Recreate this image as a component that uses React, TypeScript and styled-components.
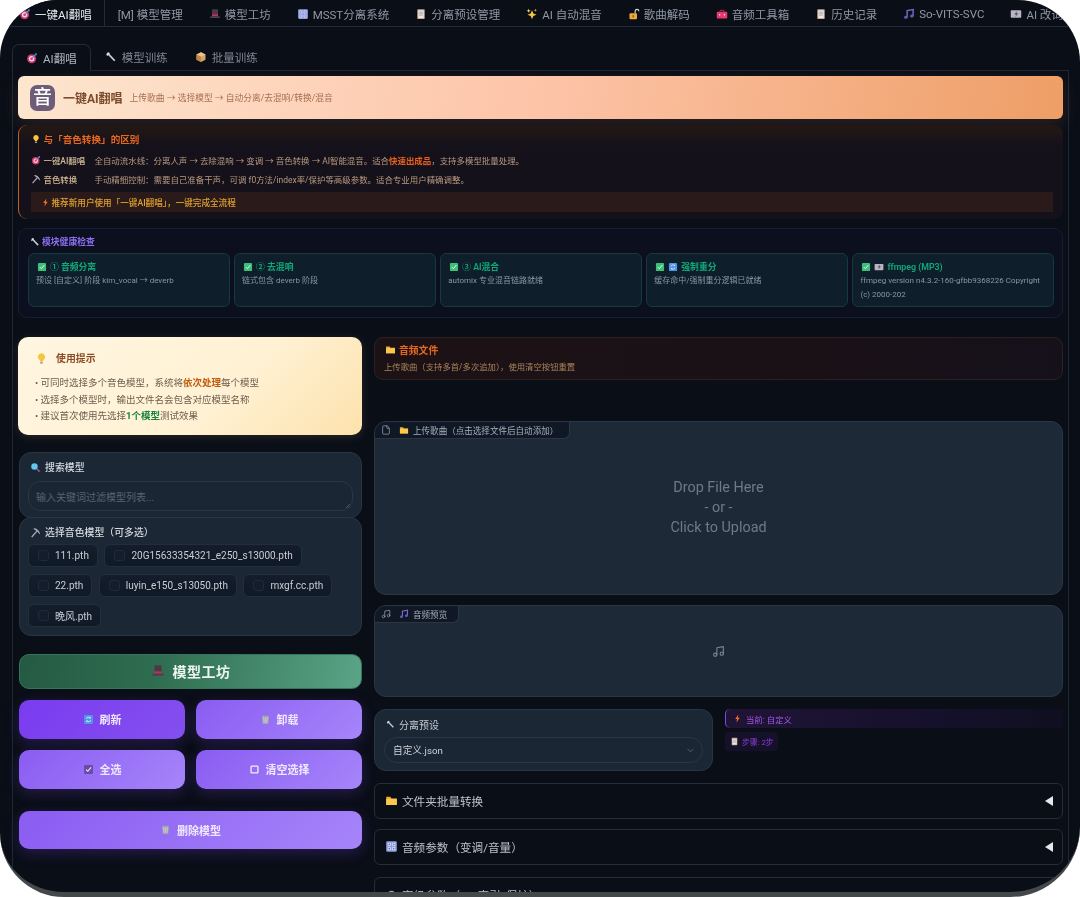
import React from "react";
import styled, { createGlobalStyle } from "styled-components";
import { File as FileIcon, Music, ChevronDown } from "lucide-react";

const Global = createGlobalStyle`
  html, body { margin: 0; padding: 0; background: #ffffff; }
  body { font-family: Roboto, "Noto Sans CJK SC", "Liberation Sans", sans-serif; overflow: hidden; }
  * { box-sizing: border-box; }
`;

const Frame = styled.div`
  width: 1080px; height: 897px; overflow: hidden; background: #0a0e17;
  border-radius: 58px 62px 70px 64px; border-bottom: 5px solid #44484b; filter: blur(0.4px);
  color: #c9ced6;
`;
const TopBar = styled.div`
  display: flex; height: 27px; padding-left: 6px; border-bottom: 1px solid #232b38; white-space: nowrap; overflow: hidden;
`;
const TopTab = styled.div<{ $active?: boolean }>`
  display: flex; align-items: center; gap: 4px; padding: 0 13px; height: 27px; font-size: 11.5px; flex: none;
  color: ${p => (p.$active ? "#e2e6ec" : "#8f98a5")};
  ${p => p.$active && "background:#0a0e17;border-right:1px solid #232b38;margin-bottom:-1px;padding-right:12px;"}
`;
const SubBar = styled.div`
  display: flex; margin: 17px 0 0 12px; height: 26px; align-items: stretch;
`;
const SubTab = styled.div<{ $active?: boolean }>`
  display: flex; align-items: center; gap: 5px; font-size: 11.5px; padding: 0 13px; flex: none;
  color: ${p => (p.$active ? "#aeb5c0" : "#7e8794")};
  ${p => p.$active
    ? "border:1px solid #232b38;border-bottom:none;border-radius:7px 7px 0 0;background:#0a0e17;margin-bottom:-1px;position:relative;z-index:1;"
    : "margin-left:1px;"}
`;
const Panel = styled.div`
  margin: 0 11px 0 12px; border: 1px solid #1f2733; border-bottom: none; padding: 5px 5px 0; height: 830px;
`;
const Hero = styled.div`
  height: 43px; border-radius: 6px; display: flex; align-items: center; padding-left: 12px;
  background: linear-gradient(100deg, #fde6cf 0%, #fdc4a8 50%, #ee9e66 100%);
  box-shadow: 0 6px 18px rgba(240, 150, 100, 0.14);
`;
const HeroLogo = styled.div`
  width: 25px; height: 26px; border-radius: 7px; background: #6e5d78; color: #fff; font-size: 19px; font-weight: 500;
  display: flex; align-items: center; justify-content: center; line-height: 1; margin-right: 8px;
`;
const HeroTitle = styled.span`font-size: 12px; font-weight: 700; color: #7b4a2b; margin-right: 7px;`;
const HeroSub = styled.span`font-size: 8.75px; color: #a86f52;`;

const Info = styled.div`
  margin-top: 6px; height: 94px; border-left: 1.5px solid #bd6220; border-radius: 9px; padding: 7px 10px 0 11.5px;
  background: linear-gradient(180deg, #241815 0%, #15111a 22%, #15111a 100%);
`;
const InfoTitle = styled.div`
  display: flex; align-items: center; gap: 3px; font-size: 9.6px; font-weight: 700; color: #e8681e; height: 14px; margin-bottom: 4px;
`;
const InfoRow = styled.div`
  display: flex; align-items: center; height: 19px; font-size: 8.45px; color: #b89a80; white-space: nowrap;
`;
const InfoLabel = styled.span`
  display: flex; align-items: center; gap: 3px; width: 64px; flex: none; font-weight: 500; color: #d0b896;
`;
const Hot = styled.b`color: #e8601c; font-weight: 600;`;
const Recommend = styled.div`
  margin-top: 4px; height: 20px; background: #2a1a1a; display: flex; align-items: center; gap: 2px; padding-left: 10px;
  font-size: 8.6px; font-weight: 500; color: #dfa02e;
`;

const Health = styled.div`
  margin-top: 9px; height: 90px; border: 1px solid #171d38; border-radius: 9px; background: #0c0f1d; padding: 5px 8px 0 9px;
`;
const HealthTitle = styled.div`
  display: flex; align-items: center; gap: 2px; height: 15px; font-size: 8.8px; font-weight: 600; color: #8a6ff2; margin: 0 0 4px 2px;
`;
const CardGrid = styled.div`display: grid; grid-template-columns: repeat(5, 1fr); gap: 4.5px;`;
const Card = styled.div`
  height: 54px; border: 1px solid #14393f; border-radius: 6px; background: #0f1e2b; padding: 6px 7px 0 8px;
`;
const CardHead = styled.div`
  display: flex; align-items: center; gap: 3px; font-size: 8.8px; font-weight: 600; color: #10a97a; height: 13px; margin-bottom: 1px;
`;
const CardText = styled.div`font-size: 8px; line-height: 14px; color: #8a96a3; margin-left: -1px;`;

const Columns = styled.div`display: grid; grid-template-columns: 344px 689px; gap: 12px; margin-top: 19px;`;
const Col = styled.div`display: flex; flex-direction: column;`;

const Tip = styled.div`
  height: 98px; border-radius: 10px; padding: 13px 0 0 17px; color: #6e5c4c; font-size: 9.5px;
  background: linear-gradient(135deg, #fff6e2 0%, #fff1d3 60%, #fde2ac 100%);
  box-shadow: 0 2px 10px rgba(250, 210, 140, 0.12);
`;
const TipTitle = styled.div`
  display: flex; align-items: center; gap: 8px; font-size: 9.9px; font-weight: 700; color: #8a4b22; height: 16px; margin-bottom: 9px;
`;
const TipLine = styled.div`height: 16.6px; line-height: 16.6px; white-space: nowrap;`;
const Orange = styled.b`color: #c05c10; font-weight: 700;`;
const Green = styled.b`color: #16803f; font-weight: 700;`;

const Box = styled.div<{ $h: number; $top: number }>`
  height: ${p => p.$h}px; margin-top: ${p => p.$top}px; margin-left: 1px; width: 343px; background: #1c2735; border: 1px solid #2a3543; border-radius: 12px; padding: 7px 8px 0;
`;
const BoxTitle = styled.div`
  display: flex; align-items: center; gap: 4px; height: 14px; font-size: 9.9px; font-weight: 500; color: #d5dae1; margin-left: 2px;
`;
const Textarea = styled.div`
  position: relative; height: 30px; margin-top: 7px; border: 1px solid #2b3746; border-radius: 12px; background: #1b2634; padding: 7px; font-size: 10px; color: #59636f;
`;
const Resize = styled.svg`position: absolute; right: 1px; bottom: 1px; width: 6px; height: 6px;`;
const Chips = styled.div`display: flex; flex-wrap: wrap; column-gap: 6.5px; row-gap: 7px; margin-top: 5px;`;
const Chip = styled.div`
  display: flex; align-items: center; gap: 6px; height: 23px; padding: 0 8px 0 9px; background: linear-gradient(180deg, #141d2b, #101926); border: 1px solid #232e3c; border-radius: 6px; font-size: 10px; color: #c9ced6;
`;
const Check = styled.span`width: 11px; height: 11px; border-radius: 3px; background: #141d2a; border: 1px solid #202b39; flex: none;`;

const Workshop = styled.div`
  margin: 18px 0 0 1px; width: 343px; height: 35px; border-radius: 10px; background: linear-gradient(100deg, #245a42 0%, #2f6d50 40%, #5aa487 100%);
  border: 1px solid #37755a; display: flex; align-items: center; justify-content: center; gap: 8px; font-size: 14px; font-weight: 700; color: #edf5f0; letter-spacing: 0.5px; padding-bottom: 1px;
`;
const BtnRow = styled.div`display: grid; grid-template-columns: 1fr 1fr; gap: 11px; margin: 11px 0 0 1px; width: 343px;`;
const PurpleBtn = styled.div<{ $solid?: boolean }>`
  height: 39px; border-radius: 10px; display: flex; align-items: center; justify-content: center; gap: 6px; padding-bottom: 1px;
  font-size: 11px; font-weight: 700; color: #eee8ff;
  background: ${p => (p.$solid ? "linear-gradient(135deg,#7a3bf0,#8450ee)" : "linear-gradient(135deg,#8a5cf2,#a685fa)")};
  box-shadow: 0 4px 14px rgba(124, 70, 240, 0.25);
`;
const DeleteBtn = styled(PurpleBtn)`margin: 22px 0 0 1px; width: 343px; height: 38px;`;

const AudioBox = styled.div`
  height: 43px; border: 1px solid #2c211f; border-radius: 9px; background: linear-gradient(90deg, #1c1216, #1a1116 60%, #15101a); padding: 4px 0 0 9px;
`;
const AudioTitle = styled.div`display: flex; align-items: center; gap: 3px; height: 15px; font-size: 9.8px; font-weight: 700; color: #e8681e; margin-left: 1px;`;
const AudioSub = styled.div`font-size: 8.35px; color: #a9835c; margin-top: 3px;`;
const Drop = styled.div<{ $h: number; $top: number }>`
  position: relative; height: ${p => p.$h}px; margin-top: ${p => p.$top}px; background: #1e2937; border: 1px solid #2b3644; border-radius: 12px;
  display: flex; flex-direction: column; align-items: center; justify-content: center; overflow: hidden;
`;
const Tag = styled.div`
  position: absolute; left: 0; top: 0; height: 17px; display: flex; align-items: center; gap: 4px; padding: 0 11px 0 6px;
  background: #101826; border-right: 1px solid #2b3644; border-bottom: 1px solid #2b3644; border-radius: 0 0 6px 0; font-size: 8.55px; color: #a7afba;
`;
const TagLead = styled.span`display: flex; margin-right: 4px;`;
const DropText = styled.div`font-size: 14.4px; line-height: 20px; color: #6f7a87;`;
const PresetRow = styled.div`display: grid; grid-template-columns: 339px 338px; gap: 12px; margin-top: 12px;`;
const Preset = styled.div`
  height: 62px; background: #1c2735; border: 1px solid #2a3543; border-radius: 12px; padding: 7px 9px 0;
`;
const PresetLabel = styled.div`display: flex; align-items: center; gap: 4px; height: 14px; font-size: 10px; color: #c5cbd3; margin-left: 2px;`;
const SelectBox = styled.div`
  height: 26px; margin-top: 6px; border: 1px solid #2b3746; border-radius: 13px; background: #1b2634; display: flex; align-items: center; justify-content: space-between; padding: 0 6px 0 8px; font-size: 9.7px; color: #cdd2d9;
`;
const Current = styled.div`
  height: 19px; border-left: 1px solid #7c4be0; border-radius: 5px 0 0 5px; background: linear-gradient(90deg, #201436, #14102a 70%, #0f0f20);
  display: flex; align-items: center; gap: 4px; padding-left: 7px; font-size: 8.4px; color: #a358e8;
`;
const Steps = styled.div`
  display: inline-flex; margin-top: 4px; height: 19px; width: 53px; align-items: center; gap: 3px; padding-left: 5px; background: #16112a; border-radius: 4px; font-size: 7.8px; color: #8a3fd8;
`;
const Accordion = styled.div<{ $top: number }>`
  height: 36px; margin-top: ${p => p.$top}px; border: 1px solid #252c3a; border-radius: 6px; display: flex; align-items: center; justify-content: space-between; padding: 0 9px 0 10px; flex: none;
`;
const AccLabel = styled.div`display: flex; align-items: center; gap: 4px; font-size: 11.6px; color: #bcc2ca; padding-bottom: 1px;`;
const Tri = styled.span`width: 0; height: 0; border-style: solid; border-width: 5px 8px 5px 0; border-color: transparent #e4e7eb transparent transparent;`;

const Svg = styled.svg<{ $s: number }>`width: ${p => p.$s}px; height: ${p => p.$s}px; flex: none; display: block;`;

type IconName = "target" | "hat" | "mixer" | "memo" | "spark" | "unlock" | "toolbox" | "note" | "film" | "wrench" | "box" | "bulb" | "pick" | "bolt" | "check" | "refresh" | "folder" | "search" | "trash" | "ballot" | "square" | "gear";

const shapes: Record<IconName, React.ReactNode> = {
  target: <><circle cx="7.500" cy="9" r="6" fill="#d8356b" /><circle cx="7.500" cy="9" r="3.600" fill="#eadcea" /><circle cx="7.500" cy="9" r="1.800" fill="#d8356b" /><path d="M8 8.500 13 3" stroke="#5a8fd8" strokeWidth="1.600" /><path d="M12 1.500h2.400v2.400L13 5z" fill="#4a7cc8" /></>,
  hat: <><rect x="4" y="1.500" width="8" height="9.500" rx="1" fill="#4a3a48" /><rect x="4" y="8.500" width="8" height="2.500" fill="#c4305e" /><rect x="1.500" y="11" width="13" height="2.400" rx="1.200" fill="#4f3f4d" /></>,
  mixer: <><rect x="1.500" y="1.500" width="13" height="13" rx="1.500" fill="#8f9fe0" /><rect x="3.500" y="3.500" width="3.500" height="3.500" fill="#e6e9f6" /><rect x="9" y="3.500" width="3.500" height="3.500" fill="#e6e9f6" /><rect x="3.500" y="9" width="3.500" height="3.500" fill="#e6e9f6" /><rect x="9" y="9" width="3.500" height="3.500" fill="#e6e9f6" /><circle cx="5.200" cy="5.200" r="1" fill="#4a5ab0" /><circle cx="10.800" cy="5.200" r="1" fill="#4a5ab0" /><circle cx="5.200" cy="10.800" r="1" fill="#4a5ab0" /><circle cx="10.800" cy="10.800" r="1" fill="#4a5ab0" /></>,
  memo: <><rect x="3" y="1.500" width="10" height="13" rx="1" fill="#c9a37a" /><rect x="4.300" y="3" width="7.400" height="10.500" fill="#e8e6ee" /><path d="M5.500 5.500h5M5.500 7.500h5M5.500 9.500h5" stroke="#8f8fa3" strokeWidth=".9" /></>,
  spark: <><path d="M8 3 9.800 7.200 14 9 9.800 10.800 8 15 6.200 10.800 2 9 6.200 7.200z" fill="#f5c542" /><path d="M3.500 1l.8 1.900 1.900.8-1.900.8-.8 1.900-.8-1.900L.8 3.700l1.900-.8z" fill="#f5d56a" /><path d="M12.500 1l.6 1.400 1.400.6-1.400.6-.6 1.400-.6-1.400-1.400-.6 1.400-.6z" fill="#f0a03c" /></>,
  unlock: <><path d="M9.500 7V4.400a2.500 2.500 0 0 1 5 0" fill="none" stroke="#d8d8dc" strokeWidth="1.500" /><rect x="2" y="7" width="10" height="8" rx="1.200" fill="#f0a83c" /><rect x="6.200" y="9.500" width="1.600" height="3" fill="#7a4a10" /></>,
  toolbox: <><path d="M5.500 5V3h5v2" fill="none" stroke="#b02858" strokeWidth="1.300" /><rect x="1" y="5" width="14" height="9" rx="1.200" fill="#e8366e" /><rect x="4" y="8" width="1.600" height="2" fill="#ffd0de" /><rect x="10.400" y="8" width="1.600" height="2" fill="#ffd0de" /></>,
  note: <><path d="M5.500 12V3.500l8-1.500v8.500" fill="none" stroke="#7a68c8" strokeWidth="1.900" /><ellipse cx="3.800" cy="12.300" rx="2.400" ry="2" fill="#6a5ab8" /><ellipse cx="11.800" cy="10.800" rx="2.400" ry="2" fill="#6a5ab8" /></>,
  film: <><rect x="1" y="3" width="14" height="10" rx="1" fill="#b9b4c4" /><path d="M9 4 6 8.500h2.400L7 12l4-5H8.500z" fill="#4a4552" /></>,
  wrench: <><path d="M3 2.500 13 13" stroke="#c9ced6" strokeWidth="2.400" /><path d="M1.500 5 5 1.500 6.500 3 3 6.500z" fill="#dfe2e8" /></>,
  box: <><path d="M8 1.500 14 4.500v7L8 14.500 2 11.500v-7z" fill="#d6a368" /><path d="M8 7.500 14 4.500 8 1.500 2 4.500z" fill="#eac495" /><path d="M8 7.500v7L2 11.500v-7z" fill="#bd8648" /></>,
  bulb: <><path d="M8 1.500a4.500 4.500 0 0 0-2.500 8.200c.5.4.8 1 .8 1.600h3.400c0-.6.3-1.200.8-1.600A4.500 4.500 0 0 0 8 1.500z" fill="#f6c53e" /><rect x="6.300" y="11.800" width="3.400" height="2.600" rx=".7" fill="#b9a98a" /></>,
  pick: <><path d="M2.500 14.500 10 6" stroke="#a2a6ae" strokeWidth="2" /><path d="M5.500 2.500c4-.5 7.500 2.500 8.500 7.500-2-3-4-5-8.500-7.500z" fill="#bcc0c7" stroke="#bcc0c7" strokeWidth=".8" /></>,
  bolt: <path d="M9.500 1 4 9h3.400L6 15l6-8.500H8.500z" fill="#f0722a" />,
  check: <><rect x="1.500" y="1.500" width="13" height="13" rx="1.500" fill="#3dbf7a" /><path d="M4.500 8.200 7 10.700 11.700 5" fill="none" stroke="#e8f6ee" strokeWidth="1.600" /></>,
  refresh: <><rect x="1.500" y="1.500" width="13" height="13" rx="1.500" fill="#4f96e6" /><path d="M4.800 7a3.300 3.300 0 0 1 5.800-1.200M11.200 9a3.300 3.300 0 0 1-5.800 1.200" fill="none" stroke="#e8f2fc" strokeWidth="1.200" /><path d="M11 3.800v2.600H8.400z" fill="#e8f2fc" /><path d="M5 12.200V9.600h2.600z" fill="#e8f2fc" /></>,
  folder: <><path d="M1.500 3.500h5l1.500 2h6.500v8h-13z" fill="#f0a830" /><rect x="1.500" y="6" width="13" height="7.500" fill="#fbc84e" /></>,
  search: <><circle cx="6.500" cy="6.500" r="4.700" fill="#62c6ee" /><path d="M10 10l4 4" stroke="#a04a9a" strokeWidth="2.200" /></>,
  trash: <><path d="M3 2.500h10l-1 12H4z" fill="#a5a5ad" /><path d="M5 4.500 6 13M8 4.500V13M11 4.500 10 13M4 7h8M4.300 10h7.400" stroke="#cfcfd6" strokeWidth=".8" /></>,
  ballot: <><rect x="1.500" y="1.500" width="13" height="13" rx="1.500" fill="#6a4ca8" /><path d="M4.500 8.200 7 10.700 11.700 5" fill="none" stroke="#f4f0fc" strokeWidth="1.500" /></>,
  square: <rect x="3" y="3" width="10" height="10" rx="1" fill="none" stroke="#f2eefc" strokeWidth="1.900" />,
  gear: <><circle cx="8" cy="8" r="4.500" fill="#9a9fa8" /><circle cx="8" cy="8" r="1.800" fill="#0a0e17" /></>,
};

const Icon = ({ n, s = 12 }: { n: IconName; s?: number }) => (
  <Svg $s={s} viewBox="0 0 16 16" aria-hidden="true">{shapes[n]}</Svg>
);

const topTabs: { n: IconName; t: string }[] = [
  { n: "hat", t: "模型工坊" }, { n: "mixer", t: "MSST分离系统" }, { n: "memo", t: "分离预设管理" }, { n: "spark", t: "AI 自动混音" },
  { n: "unlock", t: "歌曲解码" }, { n: "toolbox", t: "音频工具箱" }, { n: "memo", t: "历史记录" }, { n: "note", t: "So-VITS-SVC" }, { n: "film", t: "AI 改词" },
];
const cards: { a: IconName[]; h: string; d: string }[] = [
  { a: ["check"], h: "① 音频分离", d: "预设 [自定义] 阶段 kim_vocal → deverb" },
  { a: ["check"], h: "② 去混响", d: "链式包含 deverb 阶段" },
  { a: ["check"], h: "③ AI混合", d: "automix 专业混音链路就绪" },
  { a: ["check", "refresh"], h: "强制重分", d: "缓存命中/强制重分逻辑已就绪" },
  { a: ["check", "film"], h: "ffmpeg (MP3)", d: "ffmpeg version n4.3.2-160-gfbb9368226 Copyright (c) 2000-202" },
];
const models = ["111.pth", "20G15633354321_e250_s13000.pth", "22.pth", "luyin_e150_s13050.pth", "mxgf.cc.pth", "晚风.pth"];

export default function App() {
  return (
    <>
      <Global />
      <Frame>
        <TopBar>
          <TopTab $active><Icon n="target" /><span>一键AI翻唱</span></TopTab>
          <TopTab><span>[M] 模型管理</span></TopTab>
          {topTabs.map(t => <TopTab key={t.t}><Icon n={t.n} /><span>{t.t}</span></TopTab>)}
        </TopBar>
        <SubBar>
          <SubTab $active><Icon n="target" s={12} /><span>AI翻唱</span></SubTab>
          <SubTab><Icon n="wrench" s={12} /><span>模型训练</span></SubTab>
          <SubTab><Icon n="box" s={12} /><span>批量训练</span></SubTab>
        </SubBar>
        <Panel>
          <Hero>
            <HeroLogo>音</HeroLogo>
            <HeroTitle>一键AI翻唱</HeroTitle>
            <HeroSub>上传歌曲 → 选择模型 → 自动分离/去混响/转换/混音</HeroSub>
          </Hero>
          <Info>
            <InfoTitle><Icon n="bulb" s={10} /><span>与「音色转换」的区别</span></InfoTitle>
            <InfoRow><InfoLabel><Icon n="target" s={10} />一键AI翻唱</InfoLabel><span>全自动流水线：分离人声 → 去除混响 → 变调 → 音色转换 → AI智能混音。适合<Hot>快速出成品</Hot>，支持多模型批量处理。</span></InfoRow>
            <InfoRow><InfoLabel><Icon n="pick" s={10} />音色转换</InfoLabel><span>手动精细控制：需要自己准备干声，可调 f0方法/index率/保护等高级参数。适合专业用户精确调整。</span></InfoRow>
            <Recommend><Icon n="bolt" s={9} /><span>推荐新用户使用「一键AI翻唱」，一键完成全流程</span></Recommend>
          </Info>
          <Health>
            <HealthTitle><Icon n="wrench" s={10} /><span>模块健康检查</span></HealthTitle>
            <CardGrid>
              {cards.map(c => (
                <Card key={c.h}>
                  <CardHead>{c.a.map(i => <Icon key={i} n={i} s={10} />)}<span>{c.h}</span></CardHead>
                  <CardText>{c.d}</CardText>
                </Card>
              ))}
            </CardGrid>
          </Health>
          <Columns>
            <Col>
              <Tip>
                <TipTitle><Icon n="bulb" s={13} /><span>使用提示</span></TipTitle>
                <TipLine>• 可同时选择多个音色模型，系统将<Orange>依次处理</Orange>每个模型</TipLine>
                <TipLine>• 选择多个模型时，输出文件名会包含对应模型名称</TipLine>
                <TipLine>• 建议首次使用先选择<Green>1个模型</Green>测试效果</TipLine>
              </Tip>
              <Box $h={66} $top={17}>
                <BoxTitle><Icon n="search" s={11} /><span>搜索模型</span></BoxTitle>
                <Textarea>输入关键词过滤模型列表...<Resize viewBox="0 0 6 6"><path d="M1 5 5 1M3.500 5 5 3.500" stroke="#6a7380" strokeWidth=".6" /></Resize></Textarea>
              </Box>
              <Box $h={119} $top={-1}>
                <BoxTitle><Icon n="pick" s={11} /><span>选择音色模型（可多选）</span></BoxTitle>
                <Chips>
                  {models.map(m => <Chip key={m}><Check /><span>{m}</span></Chip>)}
                </Chips>
              </Box>
              <Workshop><Icon n="hat" s={14} /><span>模型工坊</span></Workshop>
              <BtnRow>
                <PurpleBtn $solid><Icon n="refresh" s={11} /><span>刷新</span></PurpleBtn>
                <PurpleBtn><Icon n="trash" s={11} /><span>卸载</span></PurpleBtn>
                <PurpleBtn><Icon n="ballot" s={11} /><span>全选</span></PurpleBtn>
                <PurpleBtn><Icon n="square" s={11} /><span>清空选择</span></PurpleBtn>
              </BtnRow>
              <DeleteBtn><Icon n="trash" s={11} /><span>删除模型</span></DeleteBtn>
            </Col>
            <Col>
              <AudioBox>
                <AudioTitle><Icon n="folder" s={11} /><span>音频文件</span></AudioTitle>
                <AudioSub>上传歌曲（支持多首/多次追加），使用清空按钮重置</AudioSub>
              </AudioBox>
              <Drop $h={174} $top={41}>
                <Tag><TagLead><FileIcon size={10} color="#8a93a0" /></TagLead><Icon n="folder" s={10} /><span>上传歌曲（点击选择文件后自动添加）</span></Tag>
                <DropText>Drop File Here</DropText>
                <DropText>- or -</DropText>
                <DropText>Click to Upload</DropText>
              </Drop>
              <Drop $h={92} $top={10}>
                <Tag><TagLead><Music size={10} color="#8a93a0" /></TagLead><Icon n="note" s={10} /><span>音频预览</span></Tag>
                <Music size={13} color="#7b8592" />
              </Drop>
              <PresetRow>
                <Preset>
                  <PresetLabel><Icon n="wrench" s={9} /><span>分离预设</span></PresetLabel>
                  <SelectBox><span>自定义.json</span><ChevronDown size={11} color="#56616e" /></SelectBox>
                </Preset>
                <Col>
                  <Current><Icon n="bolt" s={9} /><span>当前: 自定义</span></Current>
                  <Steps><Icon n="memo" s={9} /><span>步骤: 2步</span></Steps>
                </Col>
              </PresetRow>
              <Accordion $top={12}><AccLabel><Icon n="folder" s={13} /><span>文件夹批量转换</span></AccLabel><Tri /></Accordion>
              <Accordion $top={10}><AccLabel><Icon n="mixer" s={13} /><span>音频参数（变调/音量）</span></AccLabel><Tri /></Accordion>
              <Accordion $top={12}><AccLabel><Icon n="gear" s={13} /><span>高级参数（F0/索引/保护）</span></AccLabel><Tri /></Accordion>
            </Col>
          </Columns>
        </Panel>
      </Frame>
    </>
  );
}
